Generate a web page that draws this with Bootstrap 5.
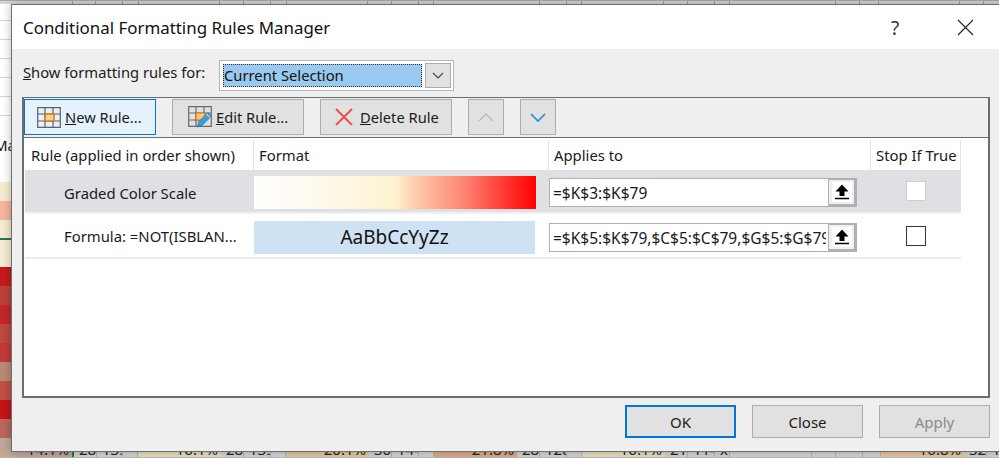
<!DOCTYPE html>
<html lang="en">
<head>
<meta charset="utf-8">
<title>Conditional Formatting Rules Manager</title>
<link href="https://cdn.jsdelivr.net/npm/bootstrap@5.3.0/dist/css/bootstrap.min.css" rel="stylesheet">
<style>
html,body{height:100%;}
body{margin:0;background:#fff;overflow:hidden;font-family:"Noto Sans",sans-serif;color:#1a1a1a;font-size:14.8px;line-height:20px;}
.sheet{position:absolute;inset:0;overflow:hidden;}
.sheet-top{height:4px;background:#d6d6d6;border-top:1px solid #a8a8a8;}
.sheet-top span{display:block;height:100%;border-right:1px solid #9a9a9a;flex:none;}
.sheet-left{position:absolute;left:0;top:4px;width:12px;display:flex;flex-direction:column;overflow:hidden;}
.lc{height:19px;flex:none;border-bottom:1px solid #d5d5d5;background:#fff;}
.lc-first{height:17px;}
.lc-text{height:40px;border:0;padding-top:20px;font-size:15px;line-height:18px;white-space:nowrap;text-indent:-6px;}
.lc-gap{height:26px;border:0;}
.lc-fill{border:0;}
.sheet-bottom{position:absolute;left:0;top:438px;height:20px;width:999px;display:flex;overflow:hidden;border-bottom:1px solid #b8b8b8;font-size:15px;line-height:20px;color:#222;}
.bc{flex:none;height:100%;text-align:right;padding:1px 3px 0 0;overflow:hidden;white-space:nowrap;}
.bg-g{background:#d4d4d4;border-right:1px solid #b4b4b4;text-align:left;padding-left:5px;}
.win{position:absolute;left:11px;top:4px;width:1000px;height:448px;border:1px solid #6e6e6e;background:#efefef;display:flex;flex-direction:column;box-shadow:0 0 9px rgba(0,0,0,.28);}
.titlebar{height:44px;background:#fff;flex:none;padding:1px 0 0 11px;}
.titletxt{font-size:16.9px;line-height:24px;color:#111;}
.help{position:absolute;left:879px;top:11px;font-size:19px;line-height:24px;color:#333;}
.xclose{position:absolute;left:945px;top:14px;}
.body-wrap{flex:1;padding:0 0 0 10px;display:flex;flex-direction:column;min-height:0;}
.showrow{height:48px;flex:none;padding-top:11px;}
.showlabel{width:197px;flex:none;padding:2px 0 0 1px;font-size:14.75px;}
.combo{width:235px;height:31px;border:1px solid #b5b5b5;background:#fff;padding:2px;gap:2px;}
.combosel{flex:1;background:#99c9ef;outline:1px dotted #333;outline-offset:-1px;margin:1px;padding-left:1px;line-height:22px;font-size:14.75px;color:#111;}
.combobtn{width:26px;height:25px;background:#e1e1e1;border:1px solid #adadad;border-radius:0;padding:0;display:flex;align-items:center;justify-content:center;}
.panel{width:968px;height:301px;flex:none;border:2px solid #6d6d6d;border-top-width:1px;background:#fff;display:flex;flex-direction:column;}
.toolbar{height:40px;flex:none;background:#efefef;border-bottom:1px solid #6d6d6d;padding:1px 0 0 0;gap:16px;}
.tbtn{height:36px;width:132px;border-radius:0;border:1px solid #adadad;background:#e1e1e1;color:#1a1a1a;font-size:14.7px;line-height:20px;padding:0 0 0 12px;display:flex;align-items:center;gap:4px;}
.tbtn:hover{background:#e1e1e1;border-color:#adadad;color:#1a1a1a;}
.tbtn.is-on{background:#e5f1fb;border-color:#0078d7;}
.tbtn.is-edit{padding-left:15px;}
.tbtn.is-del{padding-left:14px;gap:7px;}
.tbtn.is-arrow{width:36px;padding:0;justify-content:center;}
.rules{display:grid;grid-template-columns:229px 295px 322px 90px;grid-auto-rows:min-content;margin-left:1px;width:936px;padding-top:2px;font-size:14.85px;}
.hcell{height:30px;padding:5px 0 0 5px;border-right:1px solid #e4e4e4;white-space:nowrap;color:#1a1a1a;}
.hcell-first{padding-left:6px;}
.rcell{display:flex;align-items:center;min-width:0;}
.r1{height:44px;background:#dfdfe4;border-bottom:2px solid #f1f1f1;}
.r2{height:45px;background:#fff;border-bottom:2px solid #ececec;}
.r1.pad-box{padding-top:3px;}
.r2.pad-box{padding-top:4px;}
.r1.rulename{padding-top:4px;}
.r2.stopc{padding-top:1px;}
.rulename{padding-left:39px;white-space:nowrap;}
.swatch{height:33px;}
.grad{width:282px;background:linear-gradient(90deg,#fff 0,#fef9ea 25%,#fff2cf 50%,#ffc9aa 58%,#ff8070 75%,#ff0000 100%);}
.solid{width:281px;background:#cfe2f3;text-align:center;font-size:19px;line-height:33px;color:#111;}
.ref{height:29px;width:308px;display:flex;}
.refin{width:279px;height:29px;flex:none;border:1px solid #b0b0b0;border-right:0;border-radius:0;padding:0 2px 0 3px;font-size:15.5px;color:#1a1a1a;background:#fff;box-shadow:none;}
.refin:focus{border-color:#b0b0b0;box-shadow:none;}
.refbtn{width:29px;height:29px;padding:0;border:3px solid #b0b0b0;border-left-width:1px;border-top-width:2px;border-radius:0;background:#f0f0f0;display:flex;align-items:center;justify-content:center;}
.refbtn svg{background:#fff;}
.stopc{justify-content:center;}
.chk{appearance:none;-webkit-appearance:none;width:20px;height:20px;margin:0;border-radius:0;border:1px solid #333;background:#fff;opacity:1;}
.chk.is-dim{border-color:#cfcfcf;}
.footbar{height:53px;flex:none;width:968px;padding-top:7px;gap:16px;}
.fbtn{width:111px;height:33px;border-radius:0;border:1px solid #adadad;background:#e1e1e1;color:#1a1a1a;font-size:15px;line-height:20px;padding:0;}
.fbtn.is-def{border:2px solid #0078d7;}
.fbtn:disabled{opacity:1;color:#8a8a8a;background:#e1e1e1;border-color:#adadad;}
</style>
</head>
<body>
<div class="sheet">
  <div class="sheet-top d-flex">
    <span style="width:73px"></span><span style="width:23px"></span><span style="width:27px"></span><span style="width:16px"></span><span style="width:81px"></span><span style="width:24px"></span><span style="width:27px"></span><span style="width:16px"></span><span style="width:81px"></span><span style="width:24px"></span><span style="width:27px"></span><span style="width:15px"></span><span style="width:106px"></span><span style="width:27px"></span><span style="width:15px"></span><span style="width:82px"></span><span style="width:24px"></span><span style="width:27px"></span><span style="width:15px"></span><span style="width:106px"></span><span style="width:24px"></span><span style="width:19px"></span><span style="width:81px"></span><span style="width:24px"></span>
  </div>
  <div class="sheet-left">
    <div class="lc lc-first"></div><div class="lc"></div><div class="lc"></div><div class="lc"></div><div class="lc"></div><div class="lc"></div>
    <div class="lc lc-text">Ma</div>
    <div class="lc lc-gap"></div>
    <div class="lc lc-fill" style="background:#f5ecd0"></div>
    <div class="lc lc-fill" style="background:#f8b59c"></div>
    <div class="lc lc-fill" style="background:#f5ebcf;height:18px"></div>
    <div class="lc lc-fill" style="background:#1f7a4d;height:2px"></div>
    <div class="lc lc-fill" style="background:#f5ecd6;height:27px"></div>
    <div class="lc lc-fill" style="background:#c61a1a"></div>
    <div class="lc lc-fill" style="background:#bb4038"></div>
    <div class="lc lc-fill" style="background:#c3282a"></div>
    <div class="lc lc-fill" style="background:#bb4a40"></div>
    <div class="lc lc-fill" style="background:#c23a38"></div>
    <div class="lc lc-fill" style="background:#b98b74"></div>
    <div class="lc lc-fill" style="background:#c05044"></div>
    <div class="lc lc-fill" style="background:#c51515"></div>
    <div class="lc lc-fill" style="background:#b9675a"></div>
    <div class="lc lc-fill" style="background:#c0bca8;height:20px"></div>
  </div>
  <div class="sheet-bottom">
    <div class="bc" style="width:72px;background:#c0a898">14.1%</div><div style="width:2px;background:#1f7a4d;flex:none"></div>
    <div class="bc bg-g" style="width:23px">28</div><div class="bc bg-g" style="width:26px">135</div><div class="bc bg-g" style="width:15px"></div>
    <div class="bc" style="width:83px;background:#e8dfc0">16.1%</div>
    <div class="bc bg-g" style="width:23px">28</div><div class="bc bg-g" style="width:27px">135</div><div class="bc bg-g" style="width:15px"></div>
    <div class="bc" style="width:83px;background:#e0c9a0">20.1%</div>
    <div class="bc bg-g" style="width:23px">30</div><div class="bc bg-g" style="width:27px">144</div><div class="bc bg-g" style="width:15px"></div>
    <div class="bc" style="width:83px;background:#e0a88c">21.8%</div>
    <div class="bc bg-g" style="width:23px">28</div><div class="bc bg-g" style="width:27px">128</div><div class="bc bg-g" style="width:15px"></div>
    <div class="bc" style="width:83px;background:#e8dfc0">16.1%</div>
    <div class="bc bg-g" style="width:23px">21</div><div class="bc bg-g" style="width:27px">114</div><div class="bc bg-g" style="width:15px">x</div><div class="bc bg-g" style="width:82px"></div><div class="bc bg-g" style="width:24px"></div><div class="bc bg-g" style="width:27px"></div><div class="bc bg-g" style="width:18px"></div>
    <div class="bc" style="width:83px;background:#e8c8a0">16.8%</div>
    <div class="bc bg-g" style="width:23px">32</div><div class="bc bg-g" style="width:15px">134</div>
  </div>
</div>

<div class="win" role="dialog" aria-label="Conditional Formatting Rules Manager">
  <div class="titlebar d-flex align-items-center">
    <span class="titletxt">Conditional Formatting Rules Manager</span>
    <span class="help">?</span>
    <svg class="xclose" width="17" height="17" viewBox="0 0 17 17"><path d="M1 1l15 15M16 1L1 16" stroke="#222" stroke-width="1.1" fill="none"/></svg>
  </div>
  <div class="body-wrap">
    <div class="showrow d-flex">
      <div class="showlabel"><u>S</u>how formatting rules for:</div>
      <div class="combo d-flex">
        <div class="combosel">Current Selection</div>
        <button class="btn combobtn" type="button" aria-label="Open"><svg width="12" height="7" viewBox="0 0 12 7"><path d="M1 1l5 5 5-5" stroke="#444" stroke-width="1.1" fill="none"/></svg></button>
      </div>
    </div>
    <div class="panel">
      <div class="toolbar d-flex">
        <button class="btn tbtn is-on" type="button">
          <svg width="24" height="21" viewBox="0 0 24 21"><path d="M.7.7h22.6v19.6H.7zM.7 7H23M.7 14H23M8 .7v19.6M16 .7v19.6" stroke="#5f5f5f" stroke-width="1.2" fill="none"/><rect x="8" y="7" width="9" height="7" fill="#fbd38a" stroke="#d9701e" stroke-width="1.4"/></svg>
          <span><u>N</u>ew Rule...</span>
        </button>
        <button class="btn tbtn is-edit" type="button">
          <svg width="24" height="22" viewBox="0 0 24 22"><path d="M.7.7h22.6v19.6H.7zM.7 7H23M.7 14H12M8 .7v19.6M16 .7V7" stroke="#6a6a6a" stroke-width="1.2" fill="none"/><path d="M8 7h9v7H8z" fill="#fbc878" stroke="#d9701e" stroke-width="1.2"/><path d="M9.500 21l1-5L20 6.500l3.500 3.500-9.500 9.500z" fill="#3a9bdc" stroke="#1f78b8" stroke-width=".8"/><path d="M18.500 8l3.500 3.500" stroke="#fff" stroke-width="1"/></svg>
          <span><u>E</u>dit Rule...</span>
        </button>
        <button class="btn tbtn is-del" type="button">
          <svg width="18" height="18" viewBox="0 0 18 18"><path d="M1 1l16 16M17 1L1 17" stroke="#ec4b4f" stroke-width="1.800" fill="none"/></svg>
          <span><u>D</u>elete Rule</span>
        </button>
        <button class="btn tbtn is-arrow" type="button" aria-label="Move up"><svg width="16" height="9" viewBox="0 0 16 9"><path d="M1 8l7-7 7 7" stroke="#bdbdbd" stroke-width="1.500" fill="none"/></svg></button>
        <button class="btn tbtn is-arrow" type="button" aria-label="Move down"><svg width="16" height="9" viewBox="0 0 16 9"><path d="M1 1l7 7 7-7" stroke="#2a8dd4" stroke-width="1.700" fill="none"/></svg></button>
      </div>
      <div class="rules">
        <div class="hcell hcell-first">Rule (applied in order shown)</div>
        <div class="hcell">Format</div>
        <div class="hcell">Applies to</div>
        <div class="hcell">Stop If True</div>

        <div class="rcell r1 rulename">Graded Color Scale</div>
        <div class="rcell r1 pad-box"><div class="swatch grad"></div></div>
        <div class="rcell r1 pad-box"><div class="ref"><input class="form-control refin" type="text" value="=$K$3:$K$79" aria-label="Applies to"><button class="btn refbtn" type="button" aria-label="Collapse"><svg width="20" height="20" viewBox="0 0 20 20"><path d="M10 2.500l-6.500 7h4v4.500h5V9.500h4z" fill="#000"/><path d="M3 16.500h14" stroke="#000" stroke-width="1.500"/></svg></button></div></div>
        <div class="rcell r1 stopc"><input class="chk is-dim" type="checkbox" disabled aria-label="Stop If True"></div>

        <div class="rcell r2 rulename">Formula: =NOT(ISBLAN...</div>
        <div class="rcell r2 pad-box"><div class="swatch solid">AaBbCcYyZz</div></div>
        <div class="rcell r2 pad-box"><div class="ref"><input class="form-control refin" type="text" value="=$K$5:$K$79,$C$5:$C$79,$G$5:$G$79" aria-label="Applies to"><button class="btn refbtn" type="button" aria-label="Collapse"><svg width="20" height="20" viewBox="0 0 20 20"><path d="M10 2.500l-6.500 7h4v4.500h5V9.500h4z" fill="#000"/><path d="M3 16.500h14" stroke="#000" stroke-width="1.500"/></svg></button></div></div>
        <div class="rcell r2 stopc"><input class="chk" type="checkbox" aria-label="Stop If True"></div>
      </div>
    </div>
    <div class="footbar d-flex justify-content-end">
      <button class="btn fbtn is-def" type="button">OK</button>
      <button class="btn fbtn" type="button">Close</button>
      <button class="btn fbtn" type="button" disabled>Apply</button>
    </div>
  </div>
</div>
<script src="https://cdn.jsdelivr.net/npm/bootstrap@5.3.0/dist/js/bootstrap.bundle.min.js"></script>
</body>
</html>
